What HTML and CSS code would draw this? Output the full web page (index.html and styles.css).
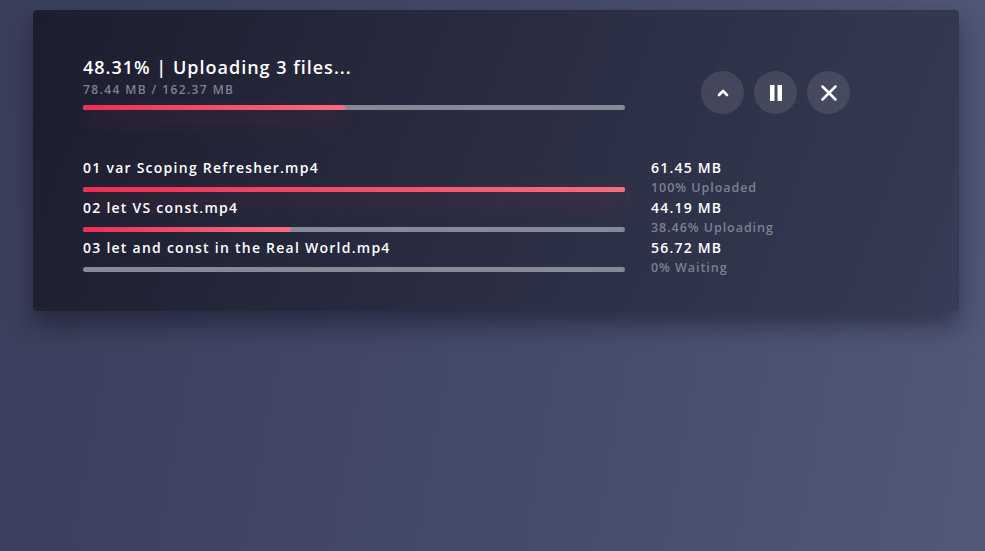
FILE: index.html
```html
<!DOCTYPE html>
<html>
<head>
<meta charset="utf-8">
<link rel="stylesheet" href="styles.css">
</head>
<body>
<div class="card">
  <div class="head">
    <div class="head-left">
      <div class="title">48.31% | Uploading 3 files...</div>
      <div class="sub">78.44 MB / 162.37 MB</div>
      <div class="bar"><div class="fill glow" style="width:48.31%"></div></div>
    </div>
    <div class="buttons">
      <button class="btn" aria-label="collapse">
        <svg width="16" height="16" viewBox="0 0 16 16"><path d="M4 10 L8 6 L12 10" fill="none" stroke="#fff" stroke-width="2.6" stroke-linecap="round" stroke-linejoin="round"/></svg>
      </button>
      <button class="btn" aria-label="pause">
        <svg width="16" height="18" viewBox="0 0 16 18"><rect x="2" y="1" width="4.5" height="16" fill="#fff"/><rect x="9.5" y="1" width="4.5" height="16" fill="#fff"/></svg>
      </button>
      <button class="btn" aria-label="cancel">
        <svg width="18" height="18" viewBox="0 0 18 18"><path d="M2.5 2.5 L15.5 15.5 M15.5 2.5 L2.5 15.5" fill="none" stroke="#fff" stroke-width="2.5" stroke-linecap="round"/></svg>
      </button>
    </div>
  </div>
  <div class="files">
    <div class="row">
      <div class="row-left">
        <div class="name">01 var Scoping Refresher.mp4</div>
        <div class="bar"><div class="fill glow" style="width:100%"></div></div>
      </div>
      <div class="row-right">
        <div class="size">61.45 MB</div>
        <div class="status">100% Uploaded</div>
      </div>
    </div>
    <div class="row">
      <div class="row-left">
        <div class="name">02 let VS const.mp4</div>
        <div class="bar"><div class="fill" style="width:38.46%"></div></div>
      </div>
      <div class="row-right">
        <div class="size">44.19 MB</div>
        <div class="status">38.46% Uploading</div>
      </div>
    </div>
    <div class="row">
      <div class="row-left">
        <div class="name">03 let and const in the Real World.mp4</div>
        <div class="bar"></div>
      </div>
      <div class="row-right">
        <div class="size">56.72 MB</div>
        <div class="status">0% Waiting</div>
      </div>
    </div>
  </div>
</div>
</body>
</html>
```

FILE: styles.css
```css
html, body {
  margin: 0;
  height: 100%;
}
body {
  background: linear-gradient(100deg, #393e5b 0%, #454b6a 55%, #525979 100%);
  font-family: "Open Sans", "Noto Sans", sans-serif;
  color: #fff;
  padding: 10px 26px 0 33px;
  box-sizing: border-box;
}
.card {
  width: 926px;
  height: 301px;
  box-sizing: border-box;
  border-radius: 4px;
  background: linear-gradient(110deg, #1c1d2e 0%, #2a2d42 50%, #363c55 100%);
  box-shadow: 0 14px 24px rgba(10, 12, 25, 0.45);
  padding: 46px 50px 0 50px;
}
.head {
  display: flex;
  align-items: flex-start;
}
.head-left {
  width: 542px;
}
.title {
  font-size: 18px;
  font-weight: 600;
  line-height: 22px;
  letter-spacing: 1px;
}
.sub {
  font-size: 12px;
  font-weight: 600;
  line-height: 16px;
  margin-top: 4px;
  color: #7e8090;
  letter-spacing: 1.4px;
}
.bar {
  height: 5px;
  border-radius: 3px;
  background: #888996;
  margin-top: 7px;
}
.fill {
  height: 100%;
  border-radius: 3px;
  background: linear-gradient(90deg, #ec2f54 0%, #f66e7e 100%);
}
.glow {
  box-shadow: 0 9px 20px rgba(236, 47, 84, 0.28);
}
.buttons {
  display: flex;
  gap: 10px;
  margin-left: 76px;
  margin-top: 15px;
}
.btn {
  width: 43px;
  height: 43px;
  border-radius: 50%;
  border: 0;
  padding: 0;
  background: rgba(255, 255, 255, 0.1);
  display: flex;
  align-items: center;
  justify-content: center;
}
.files {
  margin-top: 44px;
}
.row {
  display: flex;
  height: 40px;
}
.row-left {
  width: 542px;
}
.name {
  font-size: 14px;
  font-weight: 600;
  line-height: 20px;
  letter-spacing: 1.25px;
}
.row-left .bar {
  margin-top: 9px;
}
.row-right {
  margin-left: 26px;
}
.size {
  font-size: 14px;
  font-weight: 600;
  line-height: 20px;
  letter-spacing: 1.2px;
}
.status {
  font-size: 12.5px;
  font-weight: 600;
  line-height: 20px;
  color: #7e8090;
  letter-spacing: 0.95px;
}
```
